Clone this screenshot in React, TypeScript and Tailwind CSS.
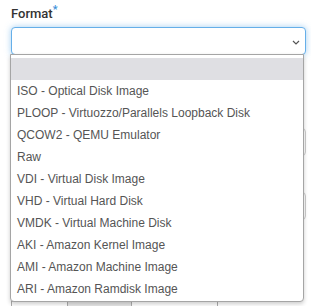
import { useState } from "react";

const formats = [
  "",
  "ISO - Optical Disk Image",
  "PLOOP - Virtuozzo/Parallels Loopback Disk",
  "QCOW2 - QEMU Emulator",
  "Raw",
  "VDI - Virtual Disk Image",
  "VHD - Virtual Hard Disk",
  "VMDK - Virtual Machine Disk",
  "AKI - Amazon Kernel Image",
  "AMI - Amazon Machine Image",
  "ARI - Amazon Ramdisk Image",
];

const visibility = [
  { name: "Private", width: "w-[57px]" },
  { name: "Shared", width: "w-[65px]" },
  { name: "Community", width: "w-[87px]" },
];

export default function App() {
  const [active, setActive] = useState(1);

  return (
    <div className="relative w-[311px] h-[306px] overflow-hidden bg-white font-['Roboto',sans-serif]">
      {/* form behind the open list */}
      <div className="pl-[11px] pr-[5px] pt-[6px]">
        <label className="block text-[13px] leading-[16px] font-medium text-[#333]">
          Format
          <span className="relative -top-[5px] text-[11px] text-[#3a8fd9]">*</span>
        </label>
        <div className="relative mt-[4px] h-[28px] rounded-[4px] border border-[#66afe9] bg-white shadow-[0_0_6px_rgba(102,175,233,0.6)]">
          <svg
            className="absolute right-[5px] top-[12px]"
            width="8"
            height="5"
            viewBox="0 0 8 5"
            fill="none"
          >
            <polyline points="1,1 4,4 7,1" stroke="#555" strokeWidth="1.2" />
          </svg>
        </div>

        {/* fields hidden under the list */}
        <div className="mt-[57px] h-[16px]" />
        <div className="h-[28px] rounded-[4px] border border-[#ccc] bg-white" />

        <div className="mt-[20px] h-[16px]" />
        <div className="h-[28px] rounded-[4px] border border-[#ccc] bg-white" />

        <div className="mt-[65px] h-[16px]" />
        <div className="flex pl-[1px]">
          {visibility.map((v, i) => (
            <button
              key={v.name}
              onClick={() => setActive(i)}
              className={`h-[28px] ${v.width} border border-[#adadad] -ml-px text-[13px] text-[#333] ${
                i === active ? "bg-[#e6e6e6]" : "bg-white"
              }`}
            >
              {v.name}
            </button>
          ))}
        </div>
      </div>

      {/* Open select list */}
      <div className="absolute left-[10px] top-[54px] w-[294px] rounded-b-[4px] border border-[#a5a5a5] bg-white pt-[3px] pb-[1px] shadow-[0_2px_4px_rgba(0,0,0,0.2)] font-['Liberation_Sans',Arial,sans-serif]">
        {formats.map((f, i) => (
          <div
            key={i}
            className={`h-[22px] pl-[6px] text-[12px] leading-[22px] text-[#555] whitespace-nowrap ${
              i === 0 ? "bg-[#dfdfe3]" : ""
            }`}
          >
            {f}
          </div>
        ))}
      </div>
    </div>
  );
}
